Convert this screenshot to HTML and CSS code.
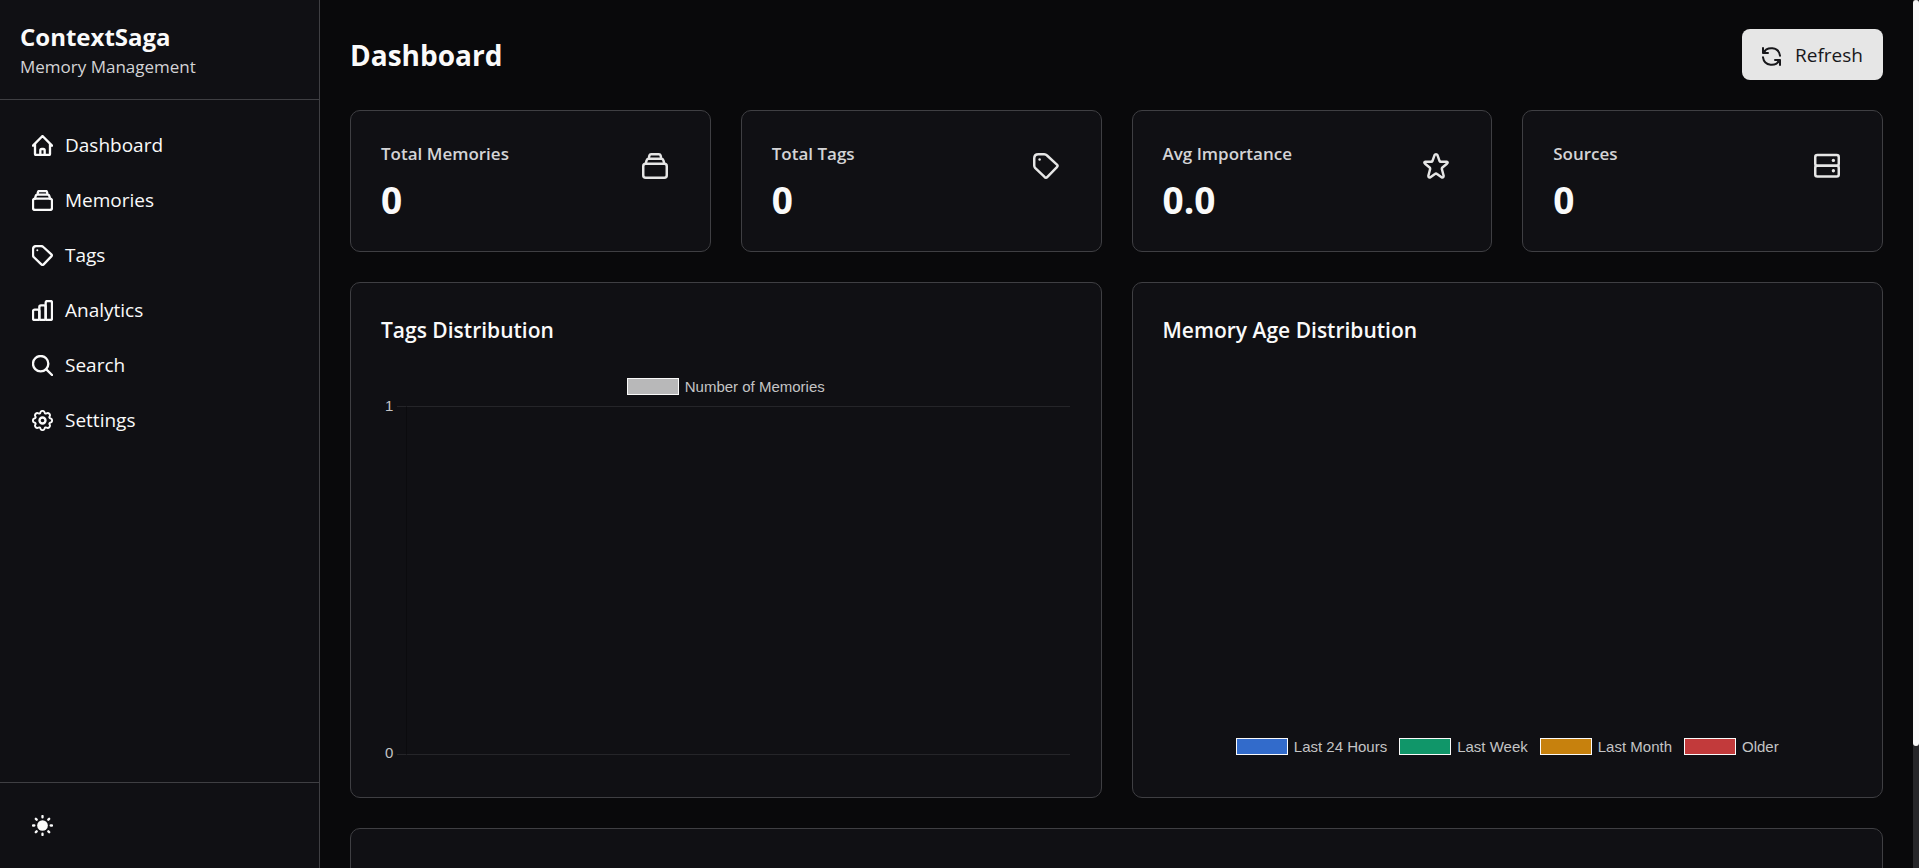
FILE: index.html
```html
<!DOCTYPE html>
<html lang="en">
<head>
<meta charset="utf-8">
<meta name="viewport" content="width=device-width, initial-scale=1">
<title>ContextSaga - Dashboard</title>
<link rel="stylesheet" href="styles.css">
</head>
<body>
<svg class="sprite" aria-hidden="true">
  <symbol id="home" viewBox="0 0 63 63"><path d="M3 32 31.500 3 60 32M9 27V57Q9 60 12 60H51Q54 60 54 57V27M25 60V46Q25 42 29 42H34Q38 42 38 46V60"/></symbol>
  <symbol id="stack" viewBox="0 0 63 63"><rect x="3" y="26" width="57" height="34" rx="6"/><path d="M9 26 11 18Q12 14 16 14H47Q51 14 52 18L54 26M16 14 18 6Q19 3 22 3H41Q44 3 45 6L47 14"/></symbol>
  <symbol id="tag" viewBox="0 0 63 63"><path d="M13 3H27Q31 3 34 6L58 28Q61 31 58 34L35 58Q31 62 28 58L5 36Q3 33 3 30V13Q3 3 13 3Z"/><circle class="dot" cx="16" cy="16" r="3"/></symbol>
  <symbol id="chart" viewBox="0 0 63 63"><rect x="3" y="29" width="19" height="31" rx="5"/><rect x="22" y="16" width="19" height="44" rx="5"/><rect x="41" y="3" width="19" height="57" rx="5"/></symbol>
  <symbol id="search" viewBox="0 0 63 63"><circle cx="26" cy="26" r="23"/><path d="M43 43 60 60"/></symbol>
  <symbol id="gear" viewBox="0 0 63 63"><circle cx="31.500" cy="31.500" r="9"/><path transform="translate(2.700 2.700) scale(3.600)" class="cog" d="M9.796 1.343c-.527-1.790-3.065-1.790-3.592 0l-.094.319a.873.873 0 0 1-1.255.52l-.292-.16c-1.640-.892-3.433.902-2.540 2.541l.159.292a.873.873 0 0 1-.52 1.255l-.319.094c-1.790.527-1.790 3.065 0 3.592l.319.094a.873.873 0 0 1 .52 1.255l-.16.292c-.892 1.640.901 3.434 2.541 2.540l.292-.159a.873.873 0 0 1 1.255.52l.094.319c.527 1.790 3.065 1.790 3.592 0l.094-.319a.873.873 0 0 1 1.255-.52l.292.16c1.640.893 3.434-.902 2.540-2.541l-.159-.292a.873.873 0 0 1 .52-1.255l.319-.094c1.790-.527 1.790-3.065 0-3.592l-.319-.094a.873.873 0 0 1-.52-1.255l.16-.292c.893-1.640-.902-3.433-2.541-2.540l-.292.159a.873.873 0 0 1-1.255-.52z"/></symbol>
  <symbol id="sun" viewBox="0 0 63 63"><circle class="dot" cx="31.500" cy="31.500" r="16"/><path d="M31.500 3V7M31.500 56V60M3 31.500H7M56 31.500H60M11.500 11.500 14 14M49 49 51.500 51.500M11.500 51.500 14 49M49 14 51.500 11.500"/></symbol>
  <symbol id="star" viewBox="0 0 63 63"><path d="M31.500 3Q34 3 35 5L40 19Q41 21 43 21H57Q62 22 58 26L47 35Q45 37 46 40L50 55Q50 61 45 59L34 51Q31.500 49 29 51L18 59Q13 61 13 55L17 40Q18 37 16 35L5 26Q1 22 6 21H20Q22 21 23 19L28 5Q29 3 31.500 3Z"/></symbol>
  <symbol id="server" viewBox="0 0 63 63"><rect x="3" y="5" width="57" height="26" rx="5"/><rect x="3" y="31" width="57" height="26" rx="5"/><circle class="dot" cx="47" cy="18" r="4"/><circle class="dot" cx="47" cy="43" r="4"/></symbol>
  <symbol id="refresh" viewBox="0 0 57 57"><path d="M3 3V18H18M4 18C14-2 50-2 54 26M54 54V39H39M53 39C43 59 7 59 3 31"/><path class="dot" d="M2 5V19H17ZM55 52V38H40Z"/></symbol>
</svg>

<div class="app">
  <aside class="sidebar">
    <div class="brand">
      <h1 class="brand-name">ContextSaga</h1>
      <p class="brand-sub">Memory Management</p>
    </div>
    <nav class="nav" aria-label="Main">
      <a class="nav-link" href="#dashboard"><svg class="icon"><use href="#home"/></svg>Dashboard</a>
      <a class="nav-link" href="#memories"><svg class="icon"><use href="#stack"/></svg>Memories</a>
      <a class="nav-link" href="#tags"><svg class="icon"><use href="#tag"/></svg>Tags</a>
      <a class="nav-link" href="#analytics"><svg class="icon"><use href="#chart"/></svg>Analytics</a>
      <a class="nav-link" href="#search-page"><svg class="icon"><use href="#search"/></svg>Search</a>
      <a class="nav-link" href="#settings"><svg class="icon"><use href="#gear"/></svg>Settings</a>
    </nav>
    <div class="sidebar-foot">
      <button class="theme-btn" type="button" aria-label="Toggle theme"><svg class="icon"><use href="#sun"/></svg></button>
    </div>
  </aside>

  <main class="main">
    <header class="page-head">
      <h2 class="page-title">Dashboard</h2>
      <button class="refresh" type="button"><svg class="refresh-icon" aria-hidden="true"><use href="#refresh"/></svg>Refresh</button>
    </header>

    <section class="stats">
      <article class="card stat"><div><h3 class="stat-label">Total Memories</h3><p class="stat-value">0</p></div><svg class="stat-icon"><use href="#stack"/></svg></article>
      <article class="card stat"><div><h3 class="stat-label">Total Tags</h3><p class="stat-value">0</p></div><svg class="stat-icon"><use href="#tag"/></svg></article>
      <article class="card stat"><div><h3 class="stat-label">Avg Importance</h3><p class="stat-value">0.0</p></div><svg class="stat-icon"><use href="#star"/></svg></article>
      <article class="card stat"><div><h3 class="stat-label">Sources</h3><p class="stat-value">0</p></div><svg class="stat-icon"><use href="#server"/></svg></article>
    </section>

    <section class="charts">
      <article class="card">
        <h3 class="card-title">Tags Distribution</h3>
        <div class="chart">
          <ul class="legend"><li class="key"><span class="swatch neutral"></span>Number of Memories</li></ul>
          <div class="graph">
            <div class="axis"><span>1</span><span>0</span></div>
            <div class="ticks"></div>
            <div class="plot"></div>
          </div>
        </div>
      </article>
      <article class="card">
        <h3 class="card-title">Memory Age Distribution</h3>
        <div class="chart chart-pie">
          <ul class="legend">
            <li class="key"><span class="swatch blue"></span>Last 24 Hours</li>
            <li class="key"><span class="swatch green"></span>Last Week</li>
            <li class="key"><span class="swatch amber"></span>Last Month</li>
            <li class="key"><span class="swatch red"></span>Older</li>
          </ul>
        </div>
      </article>
    </section>

    <section class="card recent"></section>
  </main>
  <div class="scroll-track" aria-hidden="true"><div class="scroll-thumb"></div></div>
</div>
</body>
</html>
```
FILE: styles.css
```css
* { box-sizing: border-box; margin: 0; padding: 0; }

body {
  background: #09090b;
  color: #fafafa;
  font-family: "Segoe UI", "Open Sans", "Noto Sans", sans-serif;
  font-size: 19px;
}

svg {
  fill: none;
  stroke: currentColor;
  stroke-width: 6;
  stroke-linecap: round;
  stroke-linejoin: round;
}
.sprite { display: none; }
.dot { fill: currentColor; stroke: none; }
.cog { stroke-width: 1.6; }

.app { display: flex; height: 100vh; overflow: hidden; }

/* Sidebar */
.sidebar {
  display: flex;
  flex-direction: column;
  flex: none;
  width: 320px;
  background: #101014;
  border-right: 1px solid #3f3f43;
}
.brand { padding: 20px; border-bottom: 1px solid #3f3f43; }
.brand-name { font-size: 24px; line-height: 34px; }
.brand-sub { font-size: 17px; line-height: 25px; color: #d4d4d6; }
.nav {
  display: flex;
  flex-direction: column;
  flex: 1;
  gap: 5px;
  padding: 20px;
}
.nav-link {
  display: flex;
  align-items: center;
  gap: 12px;
  height: 50px;
  padding: 0 12px;
  color: inherit;
  text-decoration: none;
}
.icon { width: 21px; height: 21px; stroke-width: 7; }
.sidebar-foot { padding: 20px; border-top: 1px solid #3f3f43; }
.theme-btn {
  display: flex;
  padding: 12px;
  background: none;
  border: 0;
  color: inherit;
}

/* Page */
.main {
  display: flex;
  flex-direction: column;
  flex: 1;
  gap: 30px;
  min-width: 0;
  padding: 29px 30px 0;
  overflow: hidden;
}
.page-head { display: flex; justify-content: space-between; align-items: center; flex: none; }
.page-title { font-size: 28px; line-height: 40px; }
.refresh {
  height: 51px;
  padding: 0 20px;
  border: 0;
  border-radius: 8px;
  background: #e6e6e6;
  color: #18181b;
  font: inherit;
}
.refresh-icon {
  width: 19px;
  height: 19px;
  margin-right: 14px;
  vertical-align: middle;
}

.card {
  padding: 30px;
  background: #101014;
  border: 1px solid #3f3f43;
  border-radius: 10px;
}
.stats { display: grid; grid-template-columns: repeat(4, 1fr); gap: 30px; flex: none; }
.stat { display: flex; justify-content: space-between; align-items: flex-start; height: 142px; }
.stat-label { font-size: 17px; line-height: 26px; font-weight: 600; color: #d4d4d6; }
.stat-value { font-size: 37px; line-height: 50px; font-weight: 700; margin-top: 8px; }
.stat-icon { width: 26px; height: 26px; margin: 12px; color: #e6e6e6; }

/* Charts */
.charts { display: grid; grid-template-columns: repeat(2, 1fr); gap: 30px; flex: none; }
.card-title { font-size: 21px; line-height: 34px; font-weight: 600; }
.chart {
  display: flex;
  flex-direction: column;
  height: 400px;
  margin-top: 20px;
  padding-top: 11px;
  font: 15px/16px "Liberation Sans", Arial, sans-serif;
  color: #c4c4c5;
}
.chart-pie { justify-content: flex-end; padding-bottom: 12px; }
.legend { display: flex; justify-content: center; gap: 12px; list-style: none; }
.key { display: flex; align-items: center; gap: 6px; }
.swatch { width: 52px; height: 17px; border: 1px solid #fafafa; }
.neutral { background: #b8b8b9; }
.blue { background: #326bcb; }
.green { background: #109669; }
.amber { background: #c7810d; }
.red { background: #c23a3b; }

.graph { display: flex; padding: 3px 1px 0 4px; }
.axis {
  display: flex;
  flex-direction: column;
  justify-content: space-between;
  width: 12px;
  height: 363px;
}
.ticks, .plot {
  height: 349px;
  margin-top: 8px;
  border: solid #252529;
  border-width: 1px 0;
}
.ticks { width: 9px; }
.plot { flex: 1; border-left: 1px solid #0b0b0e; }

.recent { flex: none; height: 240px; }

.scroll-track { flex: none; width: 6px; background: #27272a; }
.scroll-thumb { height: 86%; background: #fafafa; border-radius: 3px; }
```
